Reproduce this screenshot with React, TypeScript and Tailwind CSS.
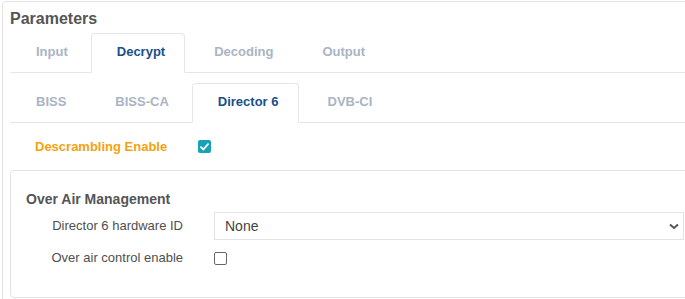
import React from "react";

const tabBase =
  "-mb-px border rounded-t-[4px] pl-[25px] pr-[19px] pt-[9px] pb-[11px] text-[13px] leading-[18px] font-bold";

function Tabs({ items, active, className }: { items: string[]; active: string; className?: string }) {
  return (
    <div className={"flex gap-[3px] border-b border-[#e6e6e6] " + (className ?? "")}>
      {items.map((t) => (
        <div
          key={t}
          className={
            tabBase +
            (t === active
              ? " border-[#e6e6e6] border-b-white bg-white text-[#17508a]"
              : " border-transparent text-[#aab4c5]")
          }
        >
          {t}
        </div>
      ))}
    </div>
  );
}

export default function App() {
  return (
    <div className="w-[685px] h-[299px] overflow-hidden bg-white font-['Liberation_Sans',Arial,sans-serif]">
      <div className="ml-[2px] mt-px w-[740px] border border-[#e3e3e3] rounded-[4px] px-[7px] pt-[7px] pb-[20px]">
        <div className="text-[16px] leading-[20px] font-bold text-[#555555]">Parameters</div>
        <Tabs className="mt-[4px]" items={["Input", "Decrypt", "Decoding", "Output"]} active="Decrypt" />
        <Tabs className="mt-[10px]" items={["BISS", "BISS-CA", "Director 6", "DVB-CI"]} active="Director 6" />

        <div className="mt-[17px] flex items-center h-[13px] pl-[25px]">
          <div className="w-[163px] text-[13px] leading-[15px] font-bold text-[#f5a20f]">Descrambling Enable</div>
          <div className="w-[13px] h-[13px] rounded-[2px] bg-[#17a2b8] flex items-center justify-center">
            <svg width="9" height="8" viewBox="0 0 9 8">
              <path d="M1 4.2 L3.4 6.5 L8 1.2" stroke="white" strokeWidth="1.8" fill="none" strokeLinecap="round" strokeLinejoin="round" />
            </svg>
          </div>
        </div>

        <div className="mt-[17px] border border-[#e3e3e3] rounded-[4px] px-[15px] pt-[19px] pb-[34px]">
          <div className="text-[14px] leading-[18px] font-bold text-[#555555]">Over Air Management</div>
          <div className="mt-[4px] grid grid-cols-[157px_470px] gap-x-[31px] items-center">
            <div className="text-right text-[13px] leading-[16px] text-[#4f4f4f]">Director 6 hardware ID</div>
            <div className="h-[28px] border border-[#e3e3e3] flex items-center justify-between pl-[10px] pr-[4px]">
              <span className="text-[14px] leading-[16px] text-[#444444]">None</span>
              <svg width="10" height="7" viewBox="0 0 10 7">
                <path d="M1 1.5 L5 5 L9 1.5" stroke="#555" strokeWidth="2" fill="none" />
              </svg>
            </div>
          </div>
          <div className="mt-[10px] grid grid-cols-[157px_470px] gap-x-[31px] items-center h-[13px]">
            <div className="text-right text-[13px] leading-[16px] text-[#4f4f4f]">Over air control enable</div>
            <div className="w-[13px] h-[13px] rounded-[2px] border border-[#666666] bg-white" />
          </div>
        </div>
      </div>
    </div>
  );
}
